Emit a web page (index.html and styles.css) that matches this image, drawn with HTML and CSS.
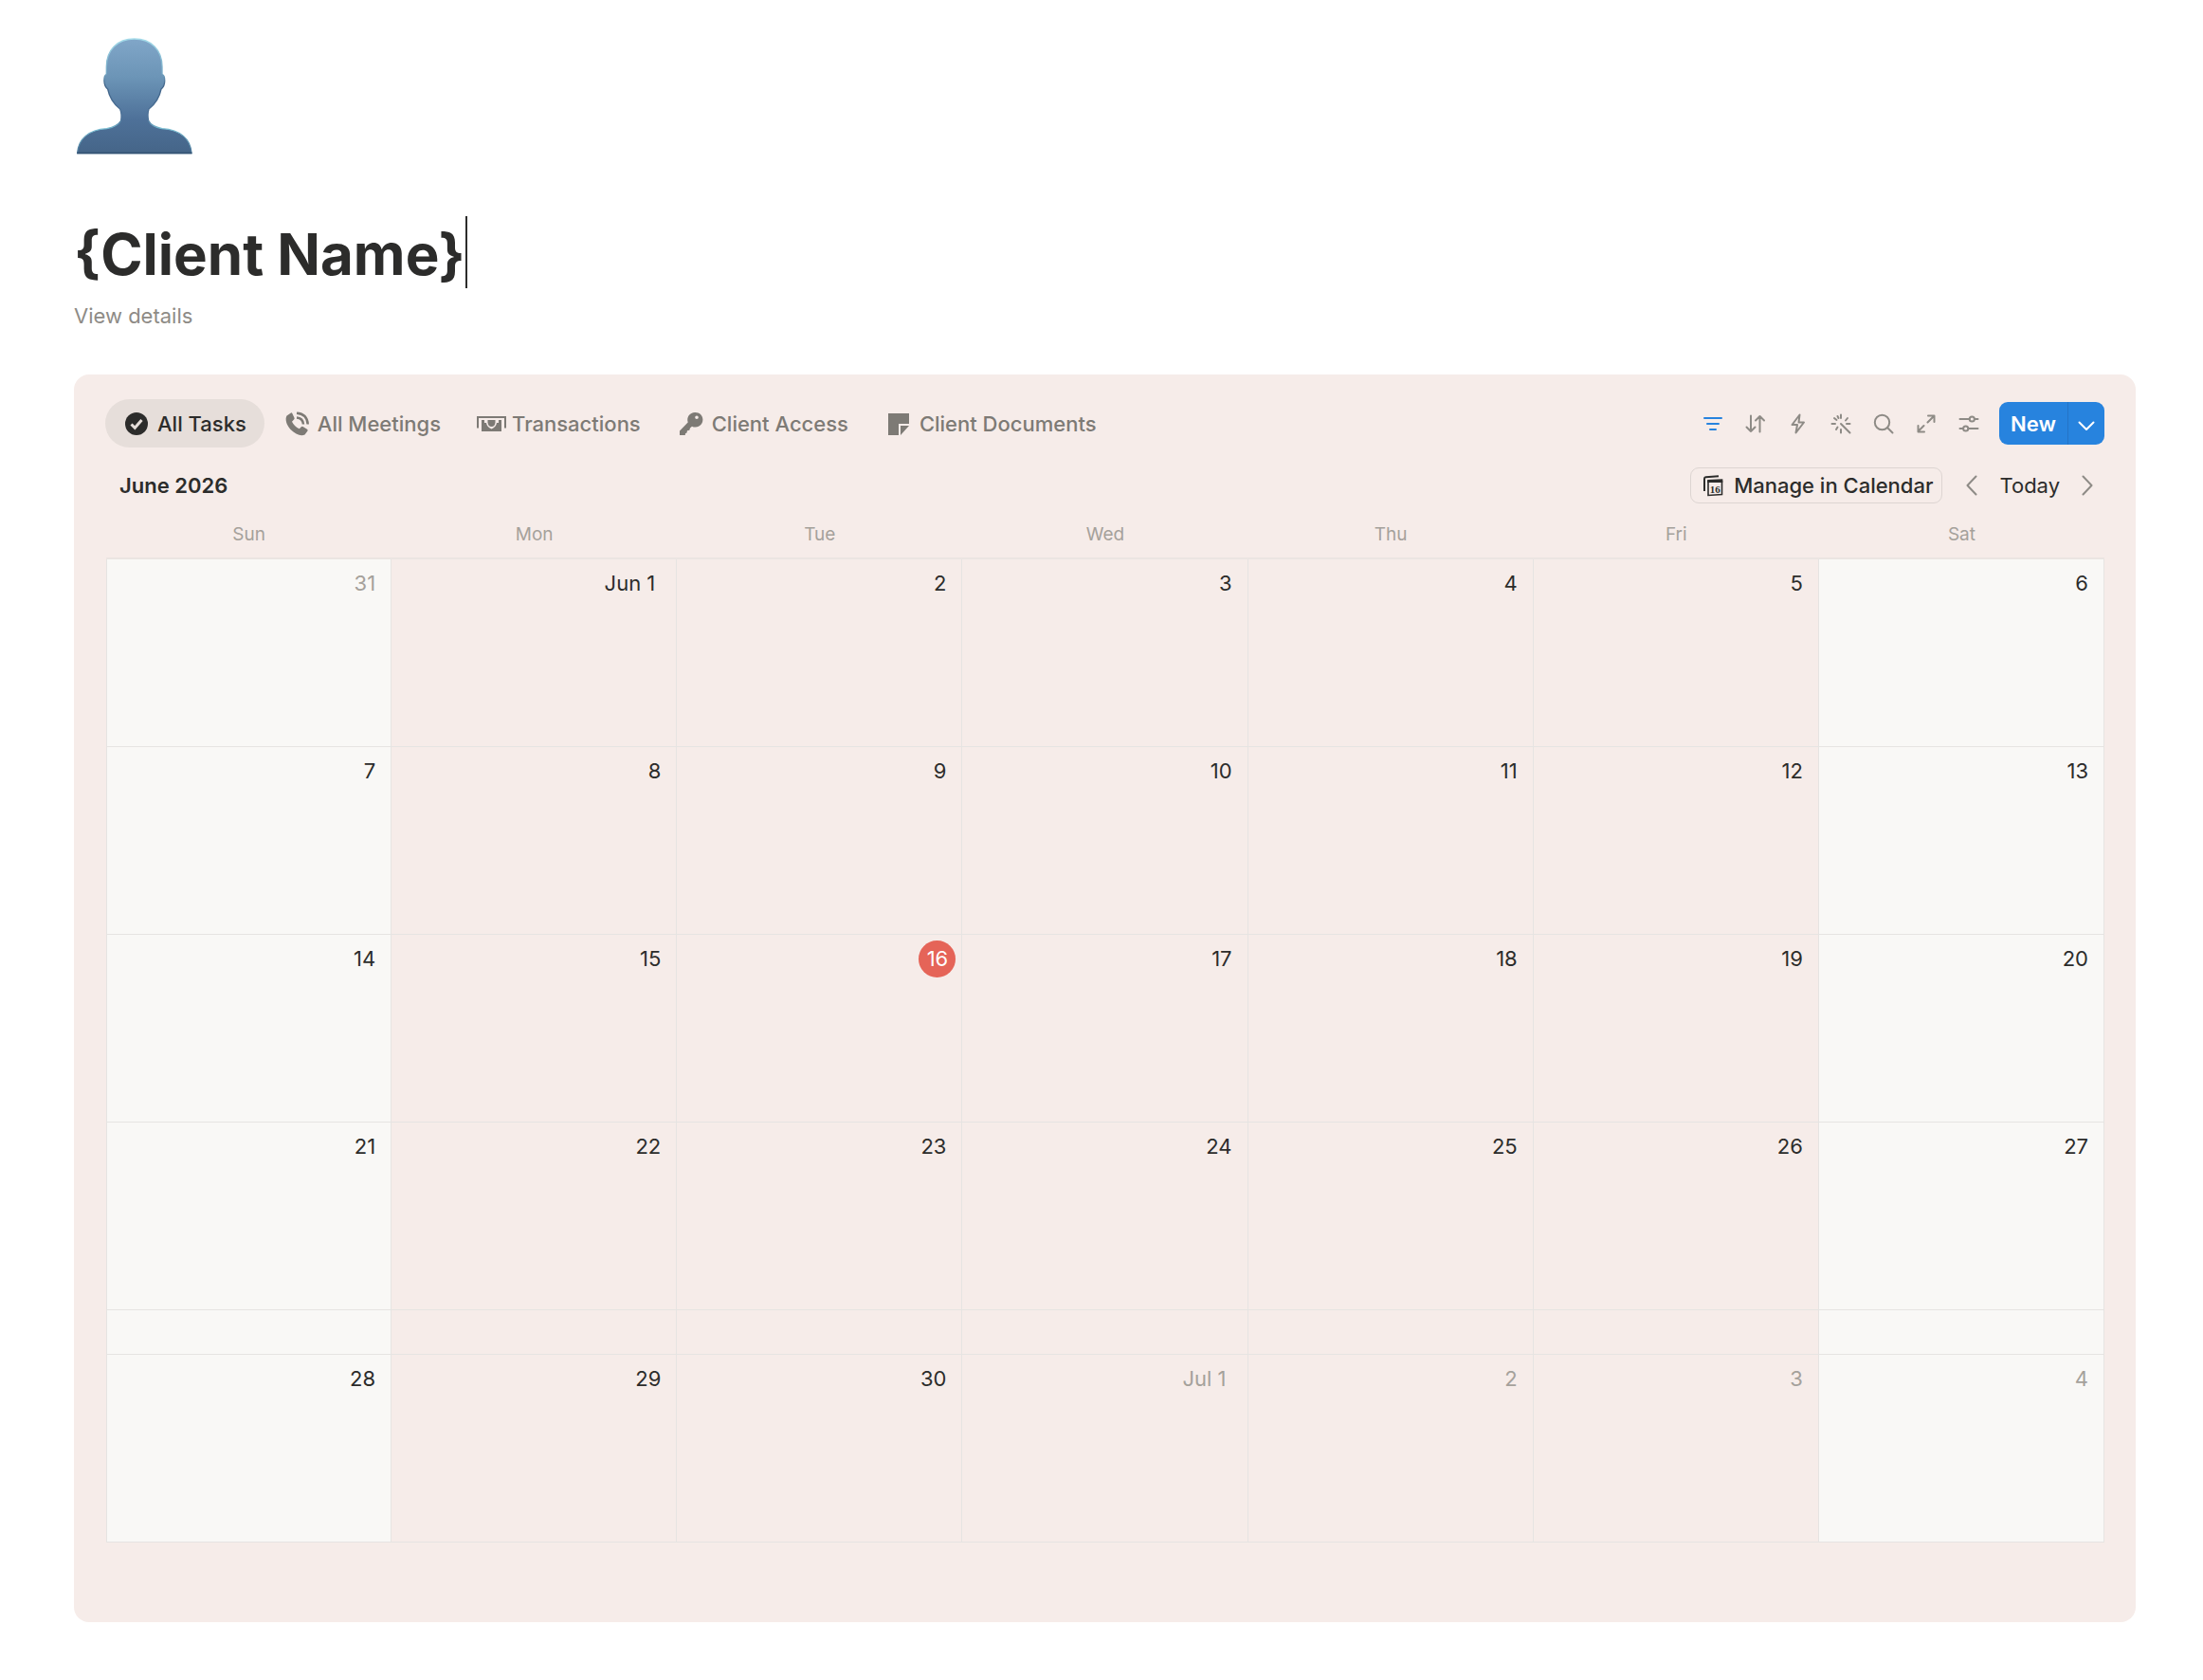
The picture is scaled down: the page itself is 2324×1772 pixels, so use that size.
FILE: index.html
```html
<!DOCTYPE html>
<html lang="en">
   <head>
      <title>{Client Name}</title>
      <meta charset="UTF-8">
      <meta name="viewport" content="width=device-width, initial-scale=1.0">
      <link rel="stylesheet" href="styles.css">
   </head>
   <body>
      <header class="page-header">
         <svg class="avatar" viewBox="54 59 378 369" aria-hidden="true">
            <defs>
               <linearGradient id="skin" x1="0" y1="0" x2="0" y2="1">
                  <stop offset="0" stop-color="#80a6c8"/>
                  <stop offset=".33" stop-color="#6c95b7"/>
                  <stop offset=".7" stop-color="#4e7199"/>
                  <stop offset="1" stop-color="#456588"/>
               </linearGradient>
               <linearGradient id="rim" x1="0" y1="60" x2="0" y2="427" gradientUnits="userSpaceOnUse">
                  <stop offset="0" stop-color="#a5dcea"/>
                  <stop offset=".3" stop-color="#76a9c6"/>
                  <stop offset=".4" stop-color="#416489"/>
                  <stop offset=".7" stop-color="#4c7298"/>
                  <stop offset=".78" stop-color="#78bdd2"/>
                  <stop offset="1" stop-color="#456f93"/>
               </linearGradient>
            </defs>
            <path fill="url(#skin)" stroke="url(#rim)" stroke-width="4" d="M245 62C190 62 157 98 157 150V174C147 178 146 210 161 221C166 246 180 268 200 284C205 296 205 307 203 321C194 335 182 341 158 346C100 350 68 378 65 424H426C423 378 391 350 333 346C309 341 297 335 290 321C287 307 287 296 291 284C311 268 325 246 330 221C345 210 344 178 333 174V150C333 98 300 62 245 62Z"/>
            <path stroke="#355474" stroke-width="5" d="M64 423H427"/>
         </svg>
         <h1 class="title">{Client Name}<span class="caret"></span></h1>
         <button class="details" type="button">View details</button>
      </header>
      <main class="panel">
         <div class="toolbar">
            <nav class="tabs">
               <a class="tab active" href="#tasks">
                  <svg class="tab-icon" viewBox="0 0 26 26"><circle cx="13" cy="13" r="12" fill="currentColor"/><path class="cut" d="M7.500 13.500l3.800 3.800 7.200-8.300"/></svg>
                  All Tasks
               </a>
               <a class="tab" href="#meetings">
                  <svg class="tab-icon" viewBox="0 0 26 26"><path fill="currentColor" d="M7 1.500L2.500 4.500C.5 8 2 14 6.500 19C11.500 24 17.500 26.500 21.500 24.500L24.500 20.500Q25 19.500 24 18.800L19.500 16Q18.500 15.500 17.800 16.300L15.800 18.300Q10.500 16 8 10.800L10.300 8.300Q11 7.500 10.400 6.500L8.300 2Q7.800 1 7 1.500Z"/><path class="line" stroke-width="2.500" d="M13 6.500Q19.500 7 20 13.500M13 1.800Q24 2.500 24.700 13.500"/></svg>
                  All Meetings
               </a>
               <a class="tab" href="#transactions">
                  <svg class="tab-icon" viewBox="0 0 26 26"><path class="line" stroke-width="2" d="M-1 17.500V6H28V17.500"/><path fill="currentColor" d="M3 9H6V12H8Q8.500 16 13.500 18.500Q18.500 16 19 12H21V9H24V21H3Z"/><path fill="currentColor" d="M9.500 9H17.500V11.500Q17 16 13.500 16T9.500 11.500Z"/></svg>
                  Transactions
               </a>
               <a class="tab" href="#access">
                  <svg class="tab-icon" viewBox="0 0 26 26"><path fill="currentColor" fill-rule="evenodd" d="M17 1A7.800 7.800 0 1 1 14 15.700L12 17.500L11.300 19.800L9 20.300L8.500 22.500L7 23.300L6.800 25H1V20.500L9.700 11.500A7.800 7.800 0 0 1 17 1ZM19 4.500A1.800 1.800 0 1 0 19 8.100A1.800 1.800 0 1 0 19 4.500Z"/></svg>
                  Client Access
               </a>
               <a class="tab" href="#documents">
                  <svg class="tab-icon" viewBox="0 0 26 26"><path fill="currentColor" d="M2 2H24V13H13V25H2ZM15 15H24L15 25Z"/></svg>
                  Client Documents
               </a>
            </nav>
            <div class="actions">
               <button class="tool filter" type="button" aria-label="Filter"><svg viewBox="0 0 22 22"><path d="M2 5H20M5 11H17M8 17H14"/></svg></button>
               <button class="tool" type="button" aria-label="Sort"><svg viewBox="0 0 22 22"><path d="M6 2.500V19M1.500 14.500L6 19L10.500 14.500M15.500 19.500V3M11 7.500L15.500 3L20 7.500"/></svg></button>
               <button class="tool" type="button" aria-label="Automations"><svg viewBox="0 0 22 22"><path d="M12.500 1.500L4.500 12H10L8.500 20.500L17 9.500H11.500Z"/></svg></button>
               <button class="tool" type="button" aria-label="Autofill"><svg viewBox="0 0 22 22"><path d="M11 11L20.500 20.500M11 1.500V5M11 17V20.500M1.500 11H5M17 11H20.500M4 5L6.500 7M6 17L7.500 14.500M16 7.500L18 5M7.500 3L8.500 5"/></svg></button>
               <button class="tool" type="button" aria-label="Search"><svg viewBox="0 0 22 22"><circle cx="9.500" cy="9.500" r="7.700"/><path d="M15 15L20.500 20.500"/></svg></button>
               <button class="tool" type="button" aria-label="Expand"><svg viewBox="0 0 22 22"><path d="M12.500 9.500L19 3M13 2.500H19.500V9M8.500 13L2.500 19M2.500 13V19.500H9"/></svg></button>
               <button class="tool" type="button" aria-label="Settings"><svg viewBox="0 0 22 22"><path d="M1.500 6H11.500M17 6H20.500M1.500 16H5M10.500 16H20.500"/><circle cx="14.300" cy="6" r="2.600"/><circle cx="7.700" cy="16" r="2.600"/></svg></button>
               <div class="new-group">
                  <button class="new" type="button">New</button>
                  <button class="new-more" type="button" aria-label="More"><svg viewBox="0 0 22 22"><path d="M3.500 9.500L11 17L18.500 9.500"/></svg></button>
               </div>
            </div>
         </div>
         <div class="month-bar">
            <h2 class="month">June 2026</h2>
            <div class="month-nav">
               <button class="manage" type="button">
                  <svg viewBox="0 0 24 24"><path fill="none" stroke="currentColor" stroke-width="2" d="M3 18V5Q3 3.500 4.500 3.300L18 2.200"/><path fill="none" stroke="currentColor" stroke-width="1.600" d="M7 7.500H21.500V21.500L7 22.500Z"/><path fill="currentColor" d="M6.200 6L22.300 5.300V9H6.200Z"/><text x="14.300" y="19.500" text-anchor="middle">16</text></svg>
                  Manage in Calendar
               </button>
               <button class="step" type="button" aria-label="Previous month"><svg viewBox="0 0 12 22"><path d="M10.500 1.500L1.500 11L10.500 20.500"/></svg></button>
               <button class="today-btn" type="button">Today</button>
               <button class="step" type="button" aria-label="Next month"><svg viewBox="0 0 12 22"><path d="M1.500 1.500L10.500 11L1.500 20.500"/></svg></button>
            </div>
         </div>
         <table class="calendar">
            <thead>
               <tr><th>Sun</th><th>Mon</th><th>Tue</th><th>Wed</th><th>Thu</th><th>Fri</th><th>Sat</th></tr>
            </thead>
            <tbody>
               <tr><td class="other">31</td><td class="named">Jun 1</td><td>2</td><td>3</td><td>4</td><td>5</td><td>6</td></tr>
               <tr><td>7</td><td>8</td><td>9</td><td>10</td><td>11</td><td>12</td><td>13</td></tr>
               <tr><td>14</td><td>15</td><td class="now"><span>16</span></td><td>17</td><td>18</td><td>19</td><td>20</td></tr>
               <tr><td>21</td><td>22</td><td>23</td><td>24</td><td>25</td><td>26</td><td>27</td></tr>
               <tr class="spacer"><td></td><td></td><td></td><td></td><td></td><td></td><td></td></tr>
               <tr><td>28</td><td>29</td><td>30</td><td class="other named">Jul 1</td><td class="other">2</td><td class="other">3</td><td class="other">4</td></tr>
            </tbody>
         </table>
      </main>
   </body>
</html>
```

FILE: styles.css
```css
*
{ box-sizing:border-box;}
body
{ margin:0;
  padding:40px 71px 60px 78px;
  background-color:#fff;
  color:#2c2c2b;
  font-family:Inter, "Liberation Sans", sans-serif;
  font-size:22px;
  line-height:30px;}
button
{ padding:0;
  border:none;
  background:none;
  color:inherit;
  font:inherit;
  cursor:pointer;}
svg
{ display:block;
  flex:none;}

/* page header */
.page-header
{ display:flex;
  flex-direction:column;
  align-items:flex-start;}
.avatar
{ width:126px;
  height:123px;}
.title
{ display:flex;
  align-items:flex-start;
  height:76px;
  margin:65px 0 14px;
  font-size:60px;
  line-height:80px;
  font-weight:700;}
.caret
{ width:2px;
  height:76px;
  background-color:#2c2c2b;}
.details
{ color:#8e8b86;}

/* panel with the views */
.panel
{ margin-top:47px;
  padding:26px 33px 84px;
  border-radius:16px;
  background-color:#f6ece9;}
.toolbar, .month-bar
{ display:flex;
  align-items:center;
  justify-content:space-between;}
.tabs
{ display:flex;
  gap:1px;}
.tab
{ display:flex;
  align-items:center;
  gap:9px;
  height:51px;
  padding:0 19px 0 20px;
  border-radius:26px;
  color:#7d7a75;
  font-weight:500;
  text-decoration:none;
  white-space:nowrap;}
.tab.active
{ background-color:#e6deda;
  color:#2c2c2b;}
.tab-icon
{ width:26px;
  height:26px;
  overflow:visible;}
.cut
{ fill:none;
  stroke:#e6deda;
  stroke-width:3;}
.line
{ fill:none;
  stroke:currentColor;}

.actions
{ display:flex;
  align-items:center;}
.tool
{ display:flex;
  align-items:center;
  justify-content:center;
  width:45px;
  height:45px;
  color:#8e8b86;}
.tool svg, .new-more svg
{ width:22px;
  height:22px;}
.tool svg, .new-more svg, .step svg
{ fill:none;
  stroke:currentColor;
  stroke-width:2;
  stroke-linecap:round;
  stroke-linejoin:round;}
.tool.filter
{ color:#2783de;}
.new-group
{ display:flex;
  margin-left:10px;
  border-radius:9px;
  overflow:hidden;
  background-color:#2783de;
  color:#fff;}
.new
{ width:73px;
  height:45px;
  border-right:1px solid #2474c6;
  font-weight:600;}
.new-more
{ display:flex;
  align-items:center;
  justify-content:center;
  width:38px;
  height:45px;}

/* month row */
.month-bar
{ margin-top:21px;}
.month
{ margin:0 0 0 15px;
  font-size:22px;
  font-weight:600;}
.month-nav
{ display:flex;
  align-items:center;}
.manage
{ display:flex;
  align-items:center;
  gap:10px;
  height:38px;
  margin-right:13px;
  padding:0 9px 0 11px;
  border:1px solid #ddd5d2;
  border-radius:9px;
  font-weight:500;}
.manage svg
{ width:24px;
  height:24px;}
.manage text
{ font-family:"Liberation Serif", serif;
  font-size:11px;
  font-weight:700;
  fill:currentColor;}
.step
{ display:flex;
  align-items:center;
  justify-content:center;
  width:36px;
  height:38px;
  color:#8e8b86;}
.step svg
{ width:12px;
  height:22px;}
.today-btn
{ padding:0 11px;}

/* calendar */
.calendar
{ width:100%;
  padding-left:1px;
  table-layout:fixed;
  border-spacing:0;}
.calendar th
{ padding:19px 0 10px;
  border-bottom:2px solid #ebe5e2;
  color:#a5a19b;
  font-size:19px;
  line-height:28px;
  font-weight:400;}
.calendar td
{ height:198px;
  padding:10px 16px;
  border-right:1px solid #e6e4e2;
  border-bottom:1px solid #e6e4e2;
  text-align:right;
  vertical-align:top;}
.calendar td:first-child
{ border-left:1px solid #e6e4e2;}
.calendar td:first-child, .calendar td:last-child
{ background-color:#f9f8f6;}
.calendar .spacer td
{ height:47px;}
.calendar .other
{ color:#a5a19b;}
.calendar .named
{ padding-right:22px;}
.calendar .now
{ padding:6px 6px 0 0;}
.now span
{ display:inline-block;
  width:39px;
  border-radius:50%;
  background-color:#e56458;
  color:#fff;
  line-height:39px;
  text-align:center;}
```
